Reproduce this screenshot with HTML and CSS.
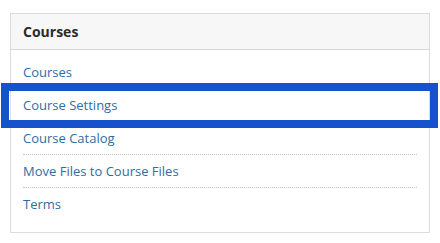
FILE: index.html
```html
<!DOCTYPE html>
<html lang="en">
<head>
  <meta charset="UTF-8">
  <title>Courses</title>
  <link rel="stylesheet" href="styles.css">
</head>
<body>
  <div class="panel">
    <div class="panel-heading">Courses</div>
    <ul class="panel-list">
      <li><a href="#">Courses</a></li>
      <li><a href="#">Course Settings</a></li>
      <li><a href="#">Course Catalog</a></li>
      <li><a href="#">Move Files to Course Files</a></li>
      <li><a href="#">Terms</a></li>
    </ul>
  </div>

  <!-- highlight marker around the selected item -->
  <div class="highlight"></div>
</body>
</html>
```

FILE: styles.css
```css
body {
  margin: 0;
  padding: 13px 10px 0;
  font-family: "Open Sans", Arial, sans-serif;
  background-color: #fff;
  position: relative;
}
.panel {
  border: 1px solid #dcdcdc;
  background-color: #fff;
}
.panel-heading {
  background-color: #f7f7f7;
  border-bottom: 1px solid #d4d4d4;
  padding: 8px 12px 7px;
  font-size: 14px;
  font-weight: bold;
  line-height: 20px;
  color: #2b2b2b;
}
.panel-list {
  list-style: none;
  margin: 0;
  padding: 6px 12px 12px;
}
.panel-list li {
  padding: 6px 0;
  line-height: 20px;
  font-size: 13px;
  border-bottom: 1px dotted #c4c4c4;
}
.panel-list li:last-child {
  border-bottom: none;
}
.panel-list a {
  color: #2e6da4;
  text-decoration: none;
}
.highlight {
  position: absolute;
  left: 1px;
  top: 83px;
  width: 437px;
  height: 45px;
  box-sizing: border-box;
  border: 8px solid #1652cc;
}
```
